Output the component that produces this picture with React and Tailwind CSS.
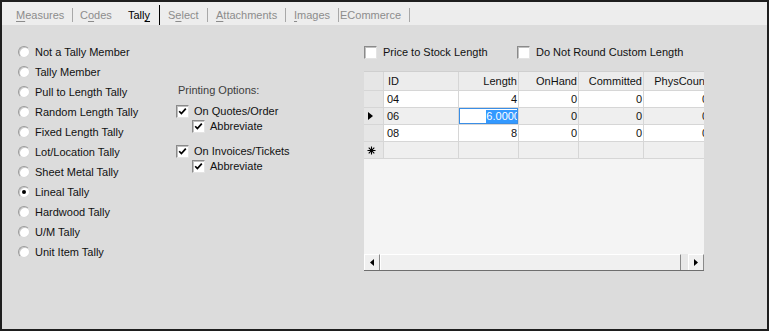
import React from 'react';

const radios = [
    'Not a Tally Member', 'Tally Member', 'Pull to Length Tally', 'Random Length Tally',
    'Fixed Length Tally', 'Lot/Location Tally', 'Sheet Metal Tally', 'Lineal Tally',
    'Hardwood Tally', 'U/M Tally', 'Unit Item Tally',
];

const rows = [
    { id: '04', len: '4' },
    { id: '06', len: '6.0000', current: true },
    { id: '08', len: '8' },
];

const Sep = () => <div className="w-px h-[14px] bg-[#a8a8a8] mt-[3px]" />;

const Radio = ({ checked }) => (
    <div className="w-[12px] h-[12px] rounded-full bg-white border border-[#9a9a9a] border-b-[#d8d8d8] border-r-[#d8d8d8] shadow-[inset_1px_1px_0_#c8c8c8] flex items-center justify-center">
        {checked && <div className="w-[4px] h-[4px] rounded-full bg-black" />}
    </div>
);

const Check = ({ checked }) => (
    <div className="w-[13px] h-[13px] bg-white border border-[#8a8a8a] border-b-[#e4e4e4] border-r-[#e4e4e4] shadow-[inset_1px_1px_0_#c0c0c0] flex items-center justify-center shrink-0">
        {checked && (
            <svg width="9" height="9" viewBox="0 0 9 9">
                <path d="M1.2 4.2 L3.4 6.6 L7.8 1.6" stroke="#000" strokeWidth="1.7" fill="none" />
            </svg>
        )}
    </div>
);

const Cell = ({ w, right, className = '', children }) => (
    <div className={`${w} shrink-0 h-full border-r border-b border-[#d6d6d6] flex items-center overflow-hidden whitespace-nowrap ${right ? 'justify-end pr-[1px]' : 'pl-[3px]'} ${className}`}>
        {children}
    </div>
);

export default function App() {
    return (
        <div className="w-[769px] h-[331px] bg-[#1e1e1e] p-[2px] font-['Liberation_Sans',Arial,sans-serif] text-[11px] text-[#111]">
            <div className="h-full flex flex-col bg-[#dcdcdc]">
                {/* tab strip */}
                <div className="h-[23px] bg-[#ededed] flex items-stretch pl-[14px] text-[#8c8c8c] shrink-0">
                    <div className="w-[56px] flex items-center pt-[4px]"><span><span className="underline underline-offset-2">M</span>easures</span></div>
                    <div className="flex items-center"><Sep /></div>
                    <div className="w-[48px] pl-[7px] flex items-center pt-[4px]"><span>C<span className="underline underline-offset-2">o</span>des</span></div>
                    <div className="w-[39px] pl-[7px] flex items-center pt-[4px] mt-[3px] border-r border-black text-[#000]"><span className="-mt-[3px]">Tall<span className="underline underline-offset-2">y</span></span></div>
                    <div className="w-[47px] pl-[8px] flex items-center pt-[4px]"><span>S<span className="underline underline-offset-2">e</span>lect</span></div>
                    <div className="flex items-center"><Sep /></div>
                    <div className="w-[77px] pl-[8px] flex items-center pt-[4px]"><span><span className="underline underline-offset-2">A</span>ttachments</span></div>
                    <div className="flex items-center"><Sep /></div>
                    <div className="w-[52px] pl-[8px] flex items-center pt-[4px]"><span><span className="underline underline-offset-2">I</span>mages</span></div>
                    <div className="flex items-center"><Sep /></div>
                    <div className="w-[70px] pl-[1px] flex items-center pt-[4px]"><span>ECommerce</span></div>
                    <div className="flex items-center"><Sep /></div>
                </div>

                <div className="flex flex-1">
                    {/* tally type radios */}
                    <div className="w-[174px] pl-[16px] pt-[17px] flex flex-col">
                        {radios.map(r => (
                            <div key={r} className="h-[20px] flex items-center gap-[5px]">
                                <Radio checked={r === 'Lineal Tally'} />
                                <span>{r}</span>
                            </div>
                        ))}
                    </div>

                    {/* printing options */}
                    <div className="w-[188px] pt-[58px] flex flex-col">
                        <div className="h-[14px] ml-[2px] flex items-center text-[#3c3c3c]">Printing Options:</div>
                        <div className="mt-[7px] h-[15px] flex items-center gap-[5px]"><Check checked /><span>On Quotes/Order</span></div>
                        <div className="h-[15px] ml-[16px] flex items-center gap-[5px]"><Check checked /><span>Abbreviate</span></div>
                        <div className="mt-[10px] h-[15px] flex items-center gap-[5px]"><Check checked /><span>On Invoices/Tickets</span></div>
                        <div className="h-[15px] ml-[16px] flex items-center gap-[5px]"><Check checked /><span>Abbreviate</span></div>
                    </div>

                    {/* lengths grid */}
                    <div className="w-[340px] pt-[19px] flex flex-col">
                        <div className="h-[16px] flex items-center">
                            <div className="w-[153px] flex items-center gap-[6px]"><Check /><span>Price to Stock Length</span></div>
                            <div className="flex items-center gap-[6px]"><Check /><span>Do Not Round Custom Length</span></div>
                        </div>

                        <div className="mt-[11px] h-[200px] bg-[#f4f4f4] flex flex-col overflow-hidden border-t border-[#cfcfcf]">
                            <div className="flex-1 overflow-hidden">
                                <div className="h-[19px] flex bg-[#ececec]">
                                    <Cell w="w-[20px]" className="bg-[#e6e6e6]" />
                                    <Cell w="w-[75px]" className="pl-[4px]">ID</Cell>
                                    <Cell w="w-[60px]" right>Length</Cell>
                                    <Cell w="w-[60px]" right>OnHand</Cell>
                                    <Cell w="w-[65px]" right>Committed</Cell>
                                    <Cell w="w-[66px]" right>PhysCount</Cell>
                                </div>
                                {rows.map(r => (
                                    <div key={r.id} className={`h-[17px] flex ${r.current ? 'bg-[#efefef]' : 'bg-white'}`}>
                                        <Cell w="w-[20px]" className="bg-[#e6e6e6] !pl-[4px]">
                                            {r.current && (
                                                <svg width="5" height="8" viewBox="0 0 5 8"><path d="M0 0 L5 4 L0 8 Z" fill="#000" /></svg>
                                            )}
                                        </Cell>
                                        <Cell w="w-[75px]">{r.id}</Cell>
                                        {r.current ? (
                                            <div className="w-[60px] shrink-0 h-full border-b border-r border-[#d6d6d6] flex">
                                                <div className="flex-1 border border-[#3a8ee6] bg-white flex items-center justify-end overflow-hidden">
                                                    <span className="bg-[#3399ff] text-white leading-[13px] mr-[-3px]">{r.len}</span>
                                                </div>
                                            </div>
                                        ) : (
                                            <Cell w="w-[60px]" right>{r.len}</Cell>
                                        )}
                                        <Cell w="w-[60px]" right>0</Cell>
                                        <Cell w="w-[65px]" right>0</Cell>
                                        <Cell w="w-[66px]" right>0</Cell>
                                    </div>
                                ))}
                                <div className="h-[17px] flex bg-[#efefef]">
                                    <Cell w="w-[20px]" className="bg-[#e6e6e6] !pl-[3px]">
                                        <svg width="9" height="9" viewBox="0 0 9 9">
                                            <path d="M4.5 0.5 V8.5 M0.5 4.5 H8.5 M1.7 1.7 L7.3 7.3 M7.3 1.7 L1.7 7.3" stroke="#000" strokeWidth="1.1" />
                                        </svg>
                                    </Cell>
                                    <Cell w="w-[75px]" />
                                    <Cell w="w-[60px]" />
                                    <Cell w="w-[60px]" />
                                    <Cell w="w-[65px]" />
                                    <Cell w="w-[66px]" />
                                </div>
                            </div>

                            {/* horizontal scrollbar */}
                            <div className="h-[17px] flex border-b border-[#6e6e6e] shrink-0">
                                <div className="w-[16px] bg-[#f0f0f0] border-t border-l border-white border-r border-r-[#8a8a8a] flex items-center justify-center">
                                    <svg width="4" height="7" viewBox="0 0 4 7"><path d="M4 0 L0 3.5 L4 7 Z" fill="#000" /></svg>
                                </div>
                                <div className="w-[301px] bg-[#f0f0f0] border-t border-l border-white border-r border-r-[#8a8a8a]" />
                                <div className="w-[7px] bg-[#e8e8e8]" />
                                <div className="w-[16px] bg-[#f0f0f0] border-t border-l border-white border-r border-r-[#8a8a8a] flex items-center justify-center">
                                    <svg width="4" height="7" viewBox="0 0 4 7"><path d="M0 0 L4 3.5 L0 7 Z" fill="#000" /></svg>
                                </div>
                            </div>
                        </div>
                    </div>
                </div>
            </div>
        </div>
    );
}
